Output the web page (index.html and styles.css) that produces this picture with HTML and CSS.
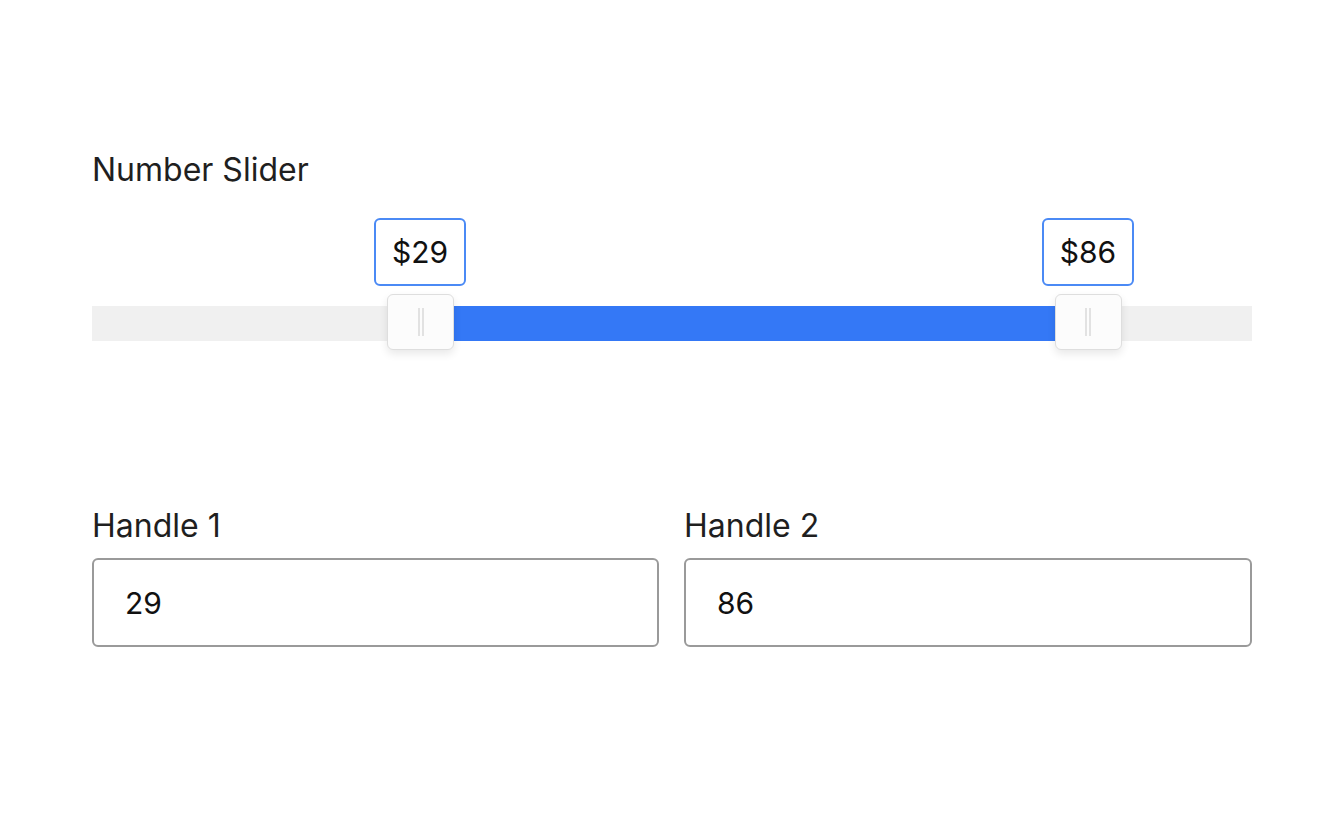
FILE: index.html
```html
<!DOCTYPE html>
<html>
<head>
<meta charset="utf-8">
<link rel="stylesheet" href="styles.css">
</head>
<body>
<div class="page">
  <div class="title">Number Slider</div>
  <div class="slider">
    <div class="track">
      <div class="fill" style="left: 28.28%; width: 57.58%;"></div>
    </div>
    <div class="thumb" style="left: 28.28%;">
      <div class="tip">$29</div>
      <div class="handle"><span class="grip"></span></div>
    </div>
    <div class="thumb" style="left: 85.86%;">
      <div class="tip">$86</div>
      <div class="handle"><span class="grip"></span></div>
    </div>
  </div>
  <div class="fields">
    <div class="field">
      <label class="label">Handle 1</label>
      <div class="input">29</div>
    </div>
    <div class="field">
      <label class="label">Handle 2</label>
      <div class="input">86</div>
    </div>
  </div>
</div>
</body>
</html>
```
FILE: styles.css
```css
* { box-sizing: border-box; }
html, body { margin: 0; padding: 0; background: #fff; }
body { font-family: Inter, "Noto Sans", sans-serif; color: #1f1f1f; }
.page { padding: 150px 78px 0 92px; width: 1330px; }
.title { font-size: 32px; line-height: 40px; height: 40px; }
.slider { position: relative; height: 288px; margin-top: 28px; }
.track { position: absolute; left: 0; right: 0; top: 88px; height: 35px; background: #f0f0f0; }
.fill { position: absolute; top: 0; bottom: 0; background: #3478f6; }
.thumb { position: absolute; top: 0; width: 0; }
.tip {
  position: absolute; left: -46px; top: 0; width: 92px; height: 68px;
  border: 2px solid #4b8af5; border-radius: 6px; background: #fff;
  display: flex; align-items: center; justify-content: center;
  font-size: 30px; color: #111;
}
.handle {
  position: absolute; left: -33px; top: 76px; width: 67px; height: 56px;
  background: #fcfcfc; border: 1px solid #dedede; border-radius: 6px;
  box-shadow: 0 4px 8px rgba(0,0,0,0.09);
  display: flex; align-items: center; justify-content: center;
}
.grip { width: 6px; height: 28px; border-left: 2px solid #e2e2e2; border-right: 2px solid #e2e2e2; }
.fields { display: grid; grid-template-columns: 567px 568px; gap: 25px; }
.field { display: flex; flex-direction: column; }
.label { font-size: 32px; line-height: 40px; margin-bottom: 12px; color: #1f1f1f; }
.input {
  height: 89px; border: 2px solid #9a9a9a; border-radius: 6px;
  padding: 0 31px; display: flex; align-items: center; font-size: 30px; color: #111;
}
```
